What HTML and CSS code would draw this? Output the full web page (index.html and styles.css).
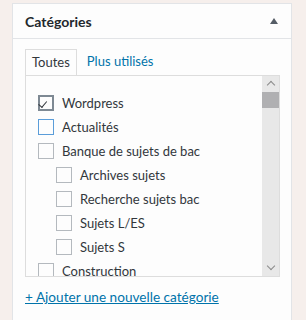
FILE: index.html
```html
<!DOCTYPE html>
<html lang="fr">
<head>
  <meta charset="UTF-8">
  <title>Catégories</title>
  <link rel="stylesheet" href="styles.css">
</head>
<body>
  <div class="postbox">
    <div class="postbox-header">
      <h2>Catégories</h2>
      <span class="toggle"></span>
    </div>
    <div class="inside">
      <ul class="tabs">
        <li class="tab active">Toutes</li>
        <li class="tab"><a href="#">Plus utilisés</a></li>
      </ul>
      <div class="panel">
        <ul class="checklist">
          <li><span class="box checked"></span>Wordpress</li>
          <li><span class="box focus"></span>Actualités</li>
          <li><span class="box"></span>Banque de sujets de bac
            <ul class="children">
              <li><span class="box"></span>Archives sujets</li>
              <li><span class="box"></span>Recherche sujets bac</li>
              <li><span class="box"></span>Sujets L/ES</li>
              <li><span class="box"></span>Sujets S</li>
            </ul>
          </li>
          <li><span class="box"></span>Construction</li>
        </ul>
        <div class="scrollbar">
          <span class="arrow up"></span>
          <span class="thumb"></span>
          <span class="track"></span>
          <span class="arrow down"></span>
        </div>
      </div>
      <a class="add-new" href="#">+ Ajouter une nouvelle catégorie</a>
    </div>
  </div>
</body>
</html>
```

FILE: styles.css
```css
html, body {
  height: 100%;
}
body {
  margin: 0;
  background: #f6efec;
  font-family: Lato, "Open Sans", sans-serif;
  font-size: 13px;
  color: #32373c;
  overflow: hidden;
}
.postbox {
  margin: 3px 0 0 12px;
  width: 278px;
  height: 100%;
  background: #fdfdfd;
  border: 1px solid #e2e4e7;
  border-bottom: none;
}
.postbox-header {
  height: 34px;
  display: flex;
  align-items: center;
  justify-content: space-between;
  padding: 0 13px 0 12px;
  border-bottom: 1px solid #e2e4e7;
}
.postbox-header h2 {
  margin: 0;
  font-size: 14px;
  font-weight: 700;
  color: #23282d;
}
.toggle {
  width: 0;
  height: 0;
  border-left: 4px solid transparent;
  border-right: 4px solid transparent;
  border-bottom: 6px solid #555d66;
}
.inside {
  padding: 10px 11px 0 12px;
}
.tabs {
  display: flex;
  list-style: none;
  margin: 0;
  padding: 0;
}
.tab {
  height: 25px;
  line-height: 25px;
  padding: 0 10px;
}
.tab.active {
  padding: 0 6px;
  border: 1px solid #dddddd;
  border-bottom: none;
  background: #fdfdfd;
  color: #32373c;
}
.tab a {
  color: #0073aa;
  text-decoration: none;
}
.panel {
  display: flex;
  height: 200px;
  border: 1px solid #dddddd;
  background: #fdfdfd;
}
.checklist {
  flex: 1;
  list-style: none;
  margin: 0;
  padding: 15px 0 0 12px;
  overflow: hidden;
}
.checklist li {
  line-height: 24px;
}
.children {
  list-style: none;
  margin: 0;
  padding: 0 0 0 18px;
}
.box {
  display: inline-block;
  box-sizing: border-box;
  width: 16px;
  height: 16px;
  margin: 0 8px -3px 0;
  border: 1px solid #b4b9be;
  background: #fdfdfd;
  position: relative;
}
.box.checked {
  border: 2px solid #7e8993;
}
.box.checked::after {
  content: "";
  position: absolute;
  top: 6px;
  left: 2px;
  width: 7px;
  height: 4px;
  border-left: 1px solid #32373c;
  border-bottom: 1px solid #32373c;
  transform: rotate(-50deg);
  transform-origin: left bottom;
}
.box.focus {
  border-color: #5b9dd9;
}
.scrollbar {
  width: 17px;
  display: flex;
  flex-direction: column;
  background: #e8e8e8;
}
.arrow {
  height: 16px;
  display: flex;
  justify-content: center;
}
.arrow::before {
  content: "";
  width: 5px;
  height: 5px;
  border-left: 1px solid #8a8a8a;
  border-top: 1px solid #8a8a8a;
  transform: rotate(45deg);
  margin-top: 6px;
}
.arrow.down::before {
  transform: rotate(-135deg);
  margin-top: 3px;
}
.thumb {
  height: 16px;
  background: #b0b0b2;
}
.track {
  flex: 1;
}
.add-new {
  display: inline-block;
  margin-top: 12px;
  color: #0073aa;
  font-size: 13.6px;
}
```
